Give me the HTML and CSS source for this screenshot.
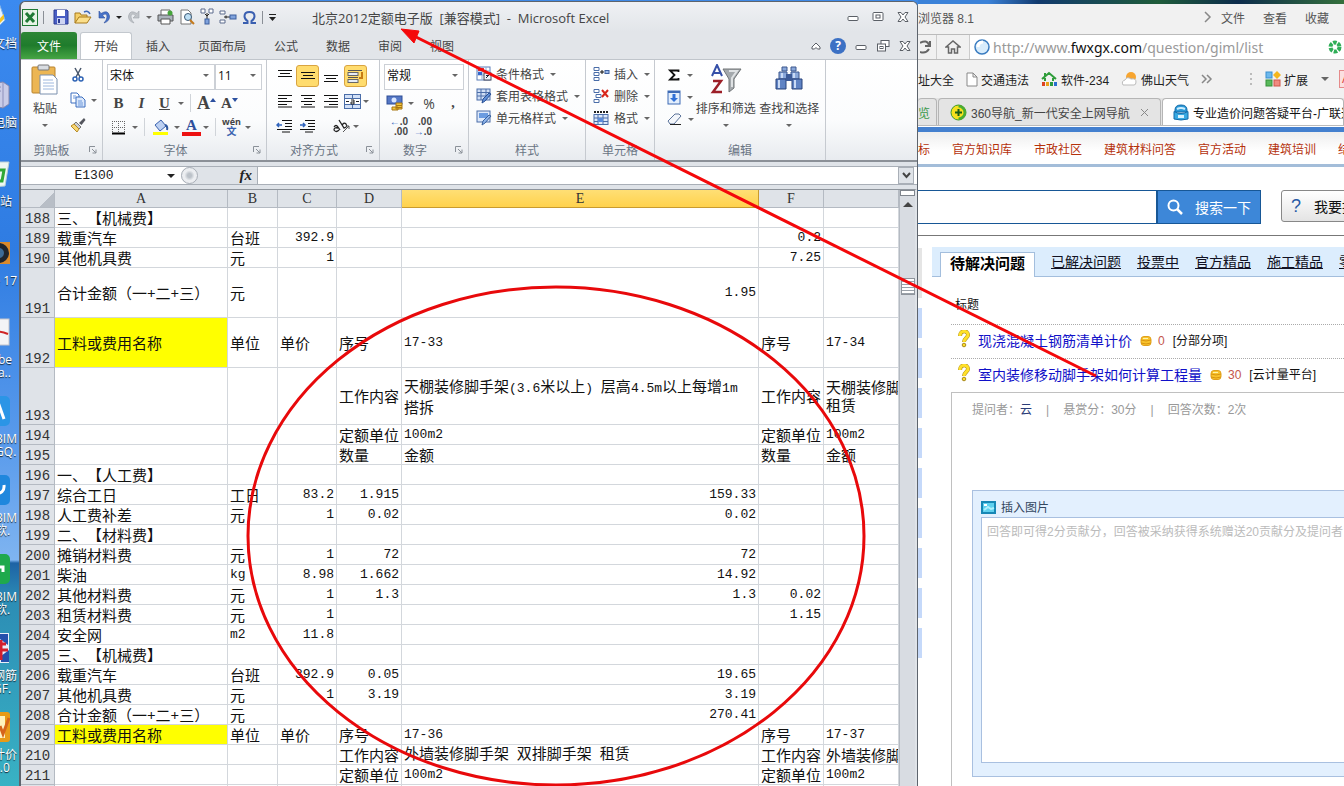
FILE: index.html
```html
<!DOCTYPE html>
<html lang="zh-CN">
<head>
<meta charset="utf-8">
<title>北京2012定额电子版 - Microsoft Excel</title>
<link rel="stylesheet" href="styles.css">
</head>
<body>
<svg class="defs" width="0" height="0">
  <defs>
    <symbol id="win-min" viewBox="0 0 14 14"><rect x="2" y="6.500" width="10" height="4" rx="1" fill="#fff" stroke="#5a5f66"/></symbol>
    <symbol id="win-max" viewBox="0 0 14 14"><rect x="2" y="2.500" width="10" height="8" rx="1" fill="#fff" stroke="#5a5f66"/><rect x="5" y="5" width="4" height="3" fill="#fff" stroke="#5a5f66"/></symbol>
    <symbol id="win-restore" viewBox="0 0 14 14"><rect x="5" y="1.500" width="8" height="6" fill="#fff" stroke="#5a5f66"/><rect x="1.500" y="5" width="8" height="7" fill="#fff" stroke="#5a5f66"/><rect x="4" y="7.500" width="3" height="2" fill="none" stroke="#5a5f66"/></symbol>
    <symbol id="win-close" viewBox="0 0 14 14"><path d="M2 2.500h3l2 2.500 2-2.500h3L9 7l3 4.500H9L7 9l-2 2.500H2L5 7z" fill="#fff" stroke="#5a5f66"/></symbol>
    <symbol id="launch" viewBox="0 0 8 8"><path d="M.5 6V.5H6M3 3l4 4M7 3.500V7H3.500" fill="none" stroke="#8a9098"/></symbol>
    <symbol id="question" viewBox="0 0 12 18"><path d="M2 6C2 0 10 0 10 5 10 8 6 8 6 12" fill="none" stroke="#a8891c" stroke-width="4"/><path d="M2 6C2 0 10 0 10 5 10 8 6 8 6 12" fill="none" stroke="#ffe02a" stroke-width="3"/><circle cx="6" cy="15" r="1.800" fill="#ffe02a" stroke="#a8891c"/></symbol>
    <symbol id="coin" viewBox="0 0 12 12"><rect x="1" y="1.500" width="10" height="9" rx="3" fill="#f8c32c" stroke="#e0a01c"/><path d="M1 5q5 2 10 0M1 8q5 2 10 0" stroke="#d9940f" fill="none"/><path d="M3 3.500h5" stroke="#fff3a8"/></symbol>
  </defs>
</svg>

<div class="desktop">
  <aside class="shortcuts">
    <div class="shortcut"><svg width="32" height="32"><path d="M4 8 20 3 26 20 18 28 4 25z" fill="#e8f4ff" stroke="#86b6e6"/><path d="M14 26 25 14v5l-9 9z" fill="#f2c327"/></svg><span>文档</span></div>
    <div class="shortcut"><svg width="32" height="32"><path d="M10 5 24 3l6 4v18l-6 4-14-3z" fill="#c9cce8" stroke="#8387ae"/><path d="M24 3v26M12 9l10-1M12 13l10-1" stroke="#8d90bb"/></svg><span>电脑</span></div>
    <div class="shortcut"><svg width="32" height="32"><path d="M6 4h24l-4 24-14 1z" fill="#eef7f2" stroke="#b9cfd6"/><path d="M18 12h7l-2 11h-6" fill="none" stroke="#2fa836" stroke-width="3"/></svg><span class="near">站</span></div>
    <div class="shortcut"><svg width="32" height="32"><rect x="4" y="5" width="27" height="22" fill="#d9892b"/><circle cx="20" cy="16" r="10" fill="#20252c"/><circle cx="20" cy="16" r="5" fill="#3d6b96"/></svg><span>e 17</span></div>
    <div class="shortcut"><svg width="32" height="32"><rect x="3" y="3" width="27" height="26" fill="#f4f4f6" stroke="#c5c5cc"/><path d="M10 18q6-5 19 0" fill="none" stroke="#cf2424" stroke-width="2"/></svg><span class="near">be<br>a..</span></div>
    <div class="shortcut"><svg width="32" height="32"><rect x="1" y="1" width="30" height="30" rx="5" fill="#2b95e6"/><path d="M15 24 20 10l5 14" fill="none" stroke="#fff" stroke-width="3"/></svg><span>BIM<br>GQ.</span></div>
    <div class="shortcut"><svg width="32" height="32"><rect x="1" y="1" width="30" height="30" rx="5" fill="#1f87dd"/><path d="M15 20q11 0 10-9" fill="none" stroke="#fff" stroke-width="3"/></svg><span>BIM<br>软.</span></div>
    <div class="shortcut"><svg width="32" height="32"><rect x="1" y="1" width="30" height="30" rx="5" fill="#1fa94c"/><path d="M14 14h10v5" fill="none" stroke="#fff" stroke-width="3"/></svg><span>BIM<br>软.</span></div>
    <div class="shortcut"><svg width="32" height="32"><rect x="2" y="1" width="28" height="30" fill="#e9eef8"/><path d="M14 2h15v11l-8-6z" fill="#2450ac"/><path d="M22 24l8-6v12h-8z" fill="#2450ac"/><path d="M13 12h14M13 18h16M22 8v20" stroke="#d41f2d" stroke-width="3"/></svg><span>钢筋<br>GF.</span></div>
    <div class="shortcut"><svg width="32" height="32"><rect x="1" y="1" width="30" height="30" rx="3" fill="#e89b17"/><rect x="5" y="5" width="21" height="22" fill="#fff2bd"/><path d="M21 15l3 8 6-16" fill="none" stroke="#d6641a" stroke-width="3"/></svg><span>计价<br>4.0</span></div>
  </aside>

  <section class="excel">
    <header class="titlebar">
      <div class="quick">
        <svg width="16" height="17"><rect x=".5" y=".5" width="15" height="16" fill="#e7f3e6" stroke="#1f7a35"/><path d="M4 4l8 9M12 4l-8 9" stroke="#1f7a35" stroke-width="3"/></svg>
        <i class="bar"></i>
        <button aria-label="保存"><svg width="16" height="16"><path d="M1 1h13l1 1v13H1z" fill="#4a5fc4" stroke="#2b3b92"/><rect x="4" y="1" width="8" height="6" fill="#fff"/><rect x="4" y="9" width="8" height="6" fill="#cdd4f2"/><rect x="5" y="10" width="2" height="4" fill="#2b3b92"/></svg></button>
        <button aria-label="打开"><svg width="18" height="16"><path d="M1 14V4h5l1 2h6v3" fill="#f5cf68" stroke="#a87b1c"/><path d="M1 14 5 8h12l-4 6z" fill="#fbdf8b" stroke="#a87b1c"/><path d="M10 3q4-2 6 2" fill="none" stroke="#3d68b8" stroke-width="1.500"/></svg></button>
        <button class="drop" aria-label="撤消"><svg width="14" height="16"><path d="M2 2v7h6L5.500 6.500Q10 3 10 8q0 3-3 6 6-2 5.500-7Q11 0 4 4.500z" fill="#4773c9" stroke="#2d4f9c" stroke-width=".6"/></svg><i class="caret dark"></i></button>
        <button class="drop" aria-label="恢复"><svg width="14" height="16"><path d="M12 2v7H6l2.500-2.500Q4 3 4 8q0 3 3 6-6-2-5.500-7Q3 0 10 4.500z" fill="#bfc3c8" stroke="#a0a5ab" stroke-width=".6"/></svg><i class="caret"></i></button>
        <button aria-label="打印"><svg width="17" height="16"><path d="M4 6V1h9v5" fill="#fff" stroke="#666"/><path d="M1 6h15v6H1z" fill="#aab2bb" stroke="#555"/><path d="M4 10h9v5H4z" fill="#fff" stroke="#555"/><circle cx="13" cy="4" r="2.500" fill="#46a53c"/></svg></button>
        <button aria-label="打印预览"><svg width="16" height="16"><path d="M2 1h7l3 3v11H2z" fill="#fff" stroke="#777"/><circle cx="9" cy="8" r="3.500" fill="#bfe0f5" stroke="#3c5a77"/><path d="M11 11l4 4" stroke="#c47a1d" stroke-width="2"/></svg></button>
        <button aria-label="向下填充"><svg width="14" height="18"><path d="M1 1h4v4H1zM9 1h4v4H9z" fill="#fff" stroke="#5a6b8c"/><path d="M5 6l2 2 2-2M7 5v6" fill="none" stroke="#222"/><rect x="5" y="11" width="4" height="5" fill="#7fa2dc" stroke="#3d5f9e"/></svg></button>
        <button aria-label="插入单元格"><svg width="18" height="16"><path d="M1 2h5v3H1zM1 11h5v3H1z" fill="#fff" stroke="#5a6b8c"/><path d="M5 8h6M7 6.500v3" stroke="#222"/><rect x="11" y="6" width="6" height="4" fill="#7fa2dc" stroke="#3d5f9e"/></svg></button>
        <button aria-label="符号"><svg width="15" height="15"><path d="M1 13h4.500v-2Q2.500 9 2.500 6.200 2.500 2 7.500 2t5 4.200Q12.500 9 9.500 11v2H14" fill="none" stroke="#3a5fb0" stroke-width="2"/></svg></button>
        <i class="bar"></i>
        <button aria-label="自定义"><svg width="9" height="9"><path d="M1 1.500h7" stroke="#222"/><path d="M1 4h7L4.500 8z" fill="#222"/></svg></button>
      </div>
      <h1>北京2012定额电子版&nbsp; [兼容模式] &nbsp;-&nbsp; Microsoft Excel</h1>
      <div class="controls wide">
        <button aria-label="最小化"><svg width="14" height="14"><use href="#win-min"/></svg></button>
        <button aria-label="最大化"><svg width="14" height="14"><use href="#win-max"/></svg></button>
        <button aria-label="关闭"><svg width="14" height="14"><use href="#win-close"/></svg></button>
      </div>
    </header>

    <nav class="tabs">
      <button class="file">文件</button>
      <button class="active">开始</button><button>插入</button><button>页面布局</button><button>公式</button><button>数据</button><button>审阅</button><button>视图</button>
      <div class="controls">
        <button aria-label="折叠功能区"><svg width="12" height="12"><path d="M2 7l4-4 4 4v2H7.500L6 7.500 4.500 9H2z" fill="#fff" stroke="#5a5f66"/></svg></button>
        <button aria-label="帮助" class="help">?</button>
        <button aria-label="最小化工作簿"><svg width="14" height="14"><use href="#win-min"/></svg></button>
        <button aria-label="还原工作簿"><svg width="14" height="14"><use href="#win-restore"/></svg></button>
        <button aria-label="关闭工作簿"><svg width="14" height="14"><use href="#win-close"/></svg></button>
      </div>
    </nav>

    <div class="ribbon">
      <div class="group g-clip">
        <div class="body">
          <button class="big"><svg width="28" height="32"><rect x="1" y="3" width="23" height="26" rx="1" fill="#ecb654" stroke="#b9832c"/><rect x="7" y="1" width="11" height="5" rx="1" fill="#d9dde2" stroke="#777"/><path d="M9 11h13l4 4v15H9z" fill="#fff" stroke="#7b90ae"/><path d="M12 16h10M12 19h11M12 22h11M12 25h11" stroke="#9eb8de"/></svg><span>粘贴</span><i class="caret"></i></button>
          <div class="stack">
            <button aria-label="剪切"><svg width="16" height="16"><path d="M5 1l5 9M11 1 6 10" stroke="#48566b" stroke-width="1.500"/><circle cx="5" cy="12" r="2" fill="none" stroke="#2c62b4" stroke-width="1.500"/><circle cx="11" cy="12" r="2" fill="none" stroke="#2c62b4" stroke-width="1.500"/></svg></button>
            <button class="drop" aria-label="复制"><svg width="16" height="16"><path d="M1 1h6l2 2v8H1z" fill="#fff" stroke="#3d6fc0"/><path d="M6 5h6l3 3v7H6z" fill="#dbe8fb" stroke="#3d6fc0"/><path d="M3 4h3M3 6h3M8 9h4M8 11h5M8 13h5" stroke="#6c98dc"/></svg><i class="caret"></i></button>
            <button aria-label="格式刷"><svg width="16" height="16"><path d="M9 6l5-5 1.500 2-4 5z" fill="#54565e"/><path d="M6 5l5 5-2 2-5-5z" fill="#c9cdd4" stroke="#777"/><path d="M4 7l5 5-2 3L1 9z" fill="#f7d774" stroke="#b68a25"/></svg></button>
          </div>
        </div>
        <footer>剪贴板<svg width="8" height="8"><use href="#launch"/></svg></footer>
      </div>

      <div class="group g-font">
        <div class="body rows">
          <div class="line">
            <label class="combo grow"><select aria-label="字体"><option>宋体</option></select><i class="caret"></i></label>
            <label class="combo size"><select aria-label="字号"><option>11</option></select><i class="caret"></i></label>
          </div>
          <div class="line">
            <button class="slot serif"><b>B</b></button><button class="slot serif"><em>I</em></button><button class="slot serif"><u>U</u></button><i class="caret"></i><i class="sep"></i>
            <button class="slot serif large">A<svg width="6" height="12"><path d="M0 5h6L3 1z" fill="#2c50a0"/></svg></button><button class="slot serif">A<svg width="6" height="12"><path d="M0 1h6L3 5z" fill="#2c50a0"/></svg></button>
          </div>
          <div class="line">
            <button class="slot" aria-label="边框"><svg width="15" height="15"><path d="M1.500 1v12M7.500 1v12M13.500 1v12M1 1.500h13M1 7.500h13" stroke="#666" stroke-dasharray="1 1"/><path d="M1 13.500h13" stroke="#000" stroke-width="2"/></svg></button><i class="caret"></i><i class="sep"></i>
            <button class="slot" aria-label="填充颜色"><svg width="17" height="17"><path d="M3 6l6-5 5 6-6 5z" fill="#bcd0f2" stroke="#3a61ad"/><path d="M13 6q3 1 2 5" stroke="#2e579f" stroke-width="2" fill="none"/><rect x="1" y="13" width="15" height="3" fill="#ff0"/></svg></button><i class="caret"></i>
            <button class="slot fontcolor">A</button><i class="caret"></i><i class="sep"></i>
            <button class="slot wen"><span>wén</span><span class="zh">文</span></button><i class="caret"></i>
          </div>
        </div>
        <footer>字体<svg width="8" height="8"><use href="#launch"/></svg></footer>
      </div>

      <div class="group g-align">
        <div class="body aligns">
          <button aria-label="顶端对齐"><svg width="16" height="16"><path d="M1 2.500h14M3 5.500h10M1 8.500h14" stroke="#111"/></svg></button>
          <button class="on" aria-label="垂直居中"><svg width="16" height="16"><path d="M1 4.500h14M3 7.500h10M1 10.500h14" stroke="#111"/></svg></button>
          <button aria-label="底端对齐"><svg width="16" height="16"><path d="M1 7.500h14M3 10.500h10M1 13.500h14" stroke="#111"/></svg></button>
          <button class="on wraptext" aria-label="自动换行"><svg width="18" height="16"><path d="M1 2.500h14M1 9.500h10" stroke="#555"/><rect x="1" y="4.500" width="10" height="3" fill="#e6ecf6" stroke="#666"/><rect x="1" y="11.500" width="10" height="3" fill="#e6ecf6" stroke="#666"/><path d="M15 4v6h-3" fill="none" stroke="#c77b14" stroke-width="2"/></svg></button>
          <button aria-label="左对齐"><svg width="16" height="16"><path d="M1 2.500h14M1 5.500h9M1 8.500h14M1 11.500h9M1 14h14" stroke="#111"/></svg></button>
          <button aria-label="居中"><svg width="16" height="16"><path d="M1 2.500h14M4 5.500h8M1 8.500h14M4 11.500h8M1 14h14" stroke="#111"/></svg></button>
          <button aria-label="右对齐"><svg width="16" height="16"><path d="M1 2.500h14M6 5.500h9M1 8.500h14M6 11.500h9M1 14h14" stroke="#111"/></svg></button>
          <button class="drop" aria-label="合并"><svg width="17" height="15"><rect x=".5" y=".5" width="16" height="14" fill="#d3e1f7" stroke="#4a6da8"/><path d="M0 4.500h17M0 10.500h17M8.500 0v4M8.500 11v4" stroke="#4a6da8"/><rect x="1" y="5" width="15" height="5" fill="#fff"/><path d="M2 7.500h3M12 7.500h3M7 6h3v4M10 8H7v2h3" stroke="#222" fill="none"/></svg><i class="caret"></i></button>
          <button aria-label="减少缩进"><svg width="17" height="16"><path d="M6 2.500h10M9 5.500h7M9 8.500h7M1 11.500h15M6 14h8" stroke="#111"/><path d="M6 7H1M3 5 1 7l2 2" fill="none" stroke="#2e63bd" stroke-width="1.500"/></svg></button>
          <button aria-label="增加缩进"><svg width="17" height="16"><path d="M6 2.500h10M9 5.500h7M9 8.500h7M1 11.500h15M6 14h8" stroke="#111"/><path d="M1 7h5M4 5l2 2-2 2" fill="none" stroke="#2e63bd" stroke-width="1.500"/></svg></button>
          <button class="drop span2" aria-label="方向"><svg width="20" height="16"><path d="M3 9q2-3 4 0l2 3M7 10q-4-1-4 2 2 3 5 0M8 2l5 8q4-1 2-4-2-2-4 1" fill="none" stroke="#222" stroke-width="1.300"/><path d="M12 14l6-6M15 8h3v3" fill="none" stroke="#555"/></svg><i class="caret"></i></button>
        </div>
        <footer>对齐方式<svg width="8" height="8"><use href="#launch"/></svg></footer>
      </div>

      <div class="group g-num">
        <div class="body rows">
          <div class="line"><label class="combo grow"><select aria-label="数字格式"><option>常规</option></select><i class="caret"></i></label></div>
          <div class="line"><button class="slot" aria-label="会计格式"><svg width="18" height="16"><rect x="1" y="1" width="15" height="8" fill="#5577c5" stroke="#2f4e96"/><circle cx="8" cy="5" r="2.500" fill="#d9e6ff"/><path d="M10 8h6v6h-6zM6 12h6v3H6z" fill="#f2c63a" stroke="#a87712"/><path d="M10 10.500h6M10 12.500h6" stroke="#a87712"/></svg></button><i class="caret"></i><button class="slot pct">%</button><button class="slot pct serif"><b>,</b></button></div>
          <div class="line"><button class="dec"><span class="blue">←</span>.0<br>.00</button><button class="dec">.00<br><span class="blue">→</span>.0</button></div>
        </div>
        <footer>数字<svg width="8" height="8"><use href="#launch"/></svg></footer>
      </div>

      <div class="group g-style">
        <div class="body list">
          <button><svg width="16" height="16"><rect x="1" y="1" width="13" height="13" fill="#fff" stroke="#5b7db8"/><path d="M1 5h13M1 9h13M6 1v13M10 1v13" stroke="#8ba8d8"/><rect x="2" y="2" width="6" height="3" fill="#d33"/><rect x="2" y="6" width="4" height="3" fill="#36c"/><rect x="8" y="7" width="7" height="7" fill="#eef3fb" stroke="#445"/><path d="M10 12l3-3M10 9.500h3" stroke="#223"/></svg>条件格式<i class="caret"></i></button>
          <button><svg width="16" height="16"><rect x="1" y="1" width="13" height="11" fill="#cfdef6" stroke="#4a6da8"/><path d="M1 4.500h13M1 8h13M5 1v11M10 1v11" stroke="#4a6da8"/><path d="M15 6l-6 7-3 2 1-4 6-6z" fill="#6190d8" stroke="#274f95"/></svg>套用表格格式<i class="caret"></i></button>
          <button><svg width="16" height="16"><rect x="1" y="1" width="13" height="11" fill="#dce8fa" stroke="#4a6da8"/><rect x="3" y="3" width="9" height="5" fill="#6a9be0"/><path d="M15 6l-6 7-3 2 1-4 6-6z" fill="#8fb4ea" stroke="#35609f"/></svg>单元格样式<i class="caret"></i></button>
        </div>
        <footer>样式</footer>
      </div>

      <div class="group g-cells">
        <div class="body list">
          <button><svg width="17" height="16"><path d="M1 1.500h5v3H1zM1 6.500h5v3H1zM1 11.500h5v3H1z" fill="#fff" stroke="#4a6da8"/><path d="M7 6h4M9 4v4" stroke="#111"/><rect x="12" y="4.500" width="4" height="3" fill="#9fbcea" stroke="#3d5f9e"/></svg>插入<i class="caret"></i></button>
          <button><svg width="17" height="16"><path d="M1 1.500h5v3H1zM3 6.500h5v3H3zM1 11.500h5v3H1z" fill="#fff" stroke="#4a6da8"/><path d="M9 2l6 7M15 2 9 9" stroke="#d8261c" stroke-width="2"/></svg>删除<i class="caret"></i></button>
          <button><svg width="17" height="16"><path d="M1 2h15" stroke="#222" stroke-width="2" stroke-dasharray="2 1"/><rect x="1" y="4.500" width="14" height="10" fill="#dce8fa" stroke="#4a6da8"/><path d="M1 8h14M1 11.500h14M5 4v11M10 4v11" stroke="#4a6da8"/><rect x="5" y="8" width="5" height="4" fill="#5b8cdc"/></svg>格式<i class="caret"></i></button>
        </div>
        <footer>单元格</footer>
      </div>

      <div class="group g-edit">
        <div class="body">
          <div class="list narrow">
            <button aria-label="求和"><svg width="14" height="14"><path d="M11.500 4V2.500H3L7.500 7 3 11.500h8.500V10" fill="none" stroke="#111" stroke-width="1.800"/></svg><i class="caret"></i></button>
            <button aria-label="填充"><svg width="14" height="15"><rect x="1" y="1" width="12" height="13" fill="#e3eefc" stroke="#3d6ab5"/><path d="M1 2h12" stroke="#3d6ab5" stroke-width="2"/><path d="M5.500 4h3v4H11l-4 4-4-4h2.500z" fill="#2f6fd6"/></svg><i class="caret"></i></button>
            <button aria-label="清除"><svg width="15" height="14"><path d="M1 9l7-7h4l2 2-7 8H3z" fill="#f3f6fb" stroke="#5b7399"/><path d="M3 12.500h11" stroke="#222"/></svg><i class="caret"></i></button>
          </div>
          <button class="big"><svg width="32" height="30"><path d="M13 5h18l-7 10v9l-5 4V15z" fill="#a4a9ad" stroke="#707477"/><path d="M19 7h8l-5 7v9" fill="none" stroke="#dfe2e4" stroke-width="2"/><path d="M2 12 7 1l5 11M4 9h7" fill="none" stroke="#3550a8" stroke-width="2"/><path d="M3 17h8L3 28h9" fill="none" stroke="#9c1f28" stroke-width="2.500"/></svg><span>排序和筛选</span><i class="caret"></i></button>
          <button class="big"><svg width="30" height="30"><path d="M8 3h5v4H8zM17 3h5v4h-5zM5 8h8v7H5zM17 8h8v7h-8z" fill="#8aa8da" stroke="#3a568d"/><path d="M2 15h10v10H2zM18 15h10v10H18z" fill="#5f83c4" stroke="#28427a"/><path d="M5 16v8M21 16v8M8 9v5M20 9v5" stroke="#c9daf5" stroke-width="2"/><rect x="12" y="10" width="6" height="7" fill="#3c5a97"/></svg><span>查找和选择</span><i class="caret"></i></button>
        </div>
        <footer>编辑</footer>
      </div>
    </div>

    <div class="formula">
      <label class="namebox"><input aria-label="名称框" value="E1300"><i class="caret dark wide"></i></label>
      <div class="fx"><i class="knob"></i><em>fx</em></div>
      <input class="content" aria-label="编辑栏">
      <button aria-label="展开编辑栏"><svg width="9" height="7"><path d="M1 1l3.500 4L8 1" fill="none" stroke="#444" stroke-width="2"/></svg></button>
    </div>

    <div class="workbook">
      <div class="sheet">
      <table>
        <colgroup><col class="c-h"><col class="c-a"><col class="c-b"><col class="c-c"><col class="c-d"><col class="c-e"><col class="c-f"><col></colgroup>
        <thead><tr><th class="corner"></th><th>A</th><th>B</th><th>C</th><th>D</th><th class="sel">E</th><th>F</th><th></th></tr></thead>
        <tbody>
        <tr><th>188</th><td>三、【机械费】</td><td></td><td></td><td></td><td></td><td></td><td></td></tr>
        <tr><th>189</th><td>载重汽车</td><td>台班</td><td class="n">392.9</td><td></td><td></td><td class="n">0.2</td><td></td></tr>
        <tr><th>190</th><td>其他机具费</td><td>元</td><td class="n">1</td><td></td><td></td><td class="n">7.25</td><td></td></tr>
        <tr class="tall"><th>191</th><td>合计金额（一+二+三）</td><td>元</td><td></td><td></td><td class="n">1.95</td><td></td><td></td></tr>
        <tr class="tall"><th>192</th><td class="mark">工料或费用名称</td><td>单位</td><td>单价</td><td>序号</td><td class="m">17-33</td><td>序号</td><td class="m">17-34</td></tr>
        <tr class="taller"><th>193</th><td></td><td></td><td></td><td>工作内容</td><td class="wrap">天棚装修脚手架<span class="m">(3.6</span>米以上<span class="m">) </span>层高<span class="m">4.5m</span>以上每增<span class="m">1m</span><br>搭拆</td><td>工作内容</td><td class="wrap">天棚装修脚手架<br>租赁</td></tr>
        <tr><th>194</th><td></td><td></td><td></td><td>定额单位</td><td class="m">100m2</td><td>定额单位</td><td class="m">100m2</td></tr>
        <tr><th>195</th><td></td><td></td><td></td><td>数量</td><td>金额</td><td>数量</td><td>金额</td></tr>
        <tr><th>196</th><td>一、【人工费】</td><td></td><td></td><td></td><td></td><td></td><td></td></tr>
        <tr><th>197</th><td>综合工日</td><td>工日</td><td class="n">83.2</td><td class="n">1.915</td><td class="n">159.33</td><td></td><td></td></tr>
        <tr><th>198</th><td>人工费补差</td><td>元</td><td class="n">1</td><td class="n">0.02</td><td class="n">0.02</td><td></td><td></td></tr>
        <tr><th>199</th><td>二、【材料费】</td><td></td><td></td><td></td><td></td><td></td><td></td></tr>
        <tr><th>200</th><td>摊销材料费</td><td>元</td><td class="n">1</td><td class="n">72</td><td class="n">72</td><td></td><td></td></tr>
        <tr><th>201</th><td>柴油</td><td class="m">kg</td><td class="n">8.98</td><td class="n">1.662</td><td class="n">14.92</td><td></td><td></td></tr>
        <tr><th>202</th><td>其他材料费</td><td>元</td><td class="n">1</td><td class="n">1.3</td><td class="n">1.3</td><td class="n">0.02</td><td></td></tr>
        <tr><th>203</th><td>租赁材料费</td><td>元</td><td class="n">1</td><td></td><td></td><td class="n">1.15</td><td></td></tr>
        <tr><th>204</th><td>安全网</td><td class="m">m2</td><td class="n">11.8</td><td></td><td></td><td></td><td></td></tr>
        <tr><th>205</th><td>三、【机械费】</td><td></td><td></td><td></td><td></td><td></td><td></td></tr>
        <tr><th>206</th><td>载重汽车</td><td>台班</td><td class="n">392.9</td><td class="n">0.05</td><td class="n">19.65</td><td></td><td></td></tr>
        <tr><th>207</th><td>其他机具费</td><td>元</td><td class="n">1</td><td class="n">3.19</td><td class="n">3.19</td><td></td><td></td></tr>
        <tr><th>208</th><td>合计金额（一+二+三）</td><td>元</td><td></td><td></td><td class="n">270.41</td><td></td><td></td></tr>
        <tr><th>209</th><td class="mark">工料或费用名称</td><td>单位</td><td>单价</td><td>序号</td><td class="m">17-36</td><td>序号</td><td class="m">17-37</td></tr>
        <tr><th>210</th><td></td><td></td><td></td><td>工作内容</td><td>外墙装修脚手架<span class="m"> </span>双排脚手架<span class="m"> </span>租赁</td><td>工作内容</td><td>外墙装修脚手架</td></tr>
        <tr><th>211</th><td></td><td></td><td></td><td>定额单位</td><td class="m">100m2</td><td>定额单位</td><td class="m">100m2</td></tr>
        <tr><th></th><td></td><td></td><td></td><td></td><td></td><td></td><td></td></tr>
        </tbody>
      </table>
      </div>
      <div class="scroll"><i class="split"></i><i class="up"></i><i class="thumb"></i></div>
    </div>
  </section>

  <section class="browser">
    <div class="wallpaper"></div>
    <div class="menubar"><span class="name">浏览器 8.1</span><svg width="8" height="12"><path d="M1 1l5 5-5 5" fill="none" stroke="#888" stroke-width="1.500"/></svg><button>文件</button><button>查看</button><button>收藏</button></div>
    <div class="address">
      <button class="reload" aria-label="刷新"><svg width="14" height="18"><path d="M0 5q7-4 9 2M10 3v5H5M9 11q-3 5-9 3" fill="none" stroke="#666" stroke-width="2"/></svg></button>
      <button class="home" aria-label="主页"><svg width="16" height="16"><path d="M1 8l7-6 7 6h-2.500v6H9.500v-4h-3v4H3.500V8z" fill="none" stroke="#666" stroke-width="1.500"/></svg></button>
      <div class="url"><svg width="18" height="18"><circle cx="9" cy="9" r="7" fill="#d8ecfb" stroke="#3a7cc0" stroke-width="1.500"/><path d="M5 9q0-5 5-5" stroke="#fff" stroke-width="3" fill="none"/></svg><span>http://www.<b>fwxgx.com</b>/question/giml/list</span>
      <svg class="speed" width="14" height="14"><circle cx="7" cy="7" r="4.500" fill="none" stroke="#2fae57" stroke-width="4" stroke-dasharray="3.500 1.200"/></svg></div>
    </div>
    <div class="bookmarks">
      <a href="#">址大全</a>
      <a href="#"><svg width="12" height="15"><path d="M1 1h6l4 4v9H1zM7 1v4h4" fill="#fff" stroke="#888"/></svg>交通违法</a>
      <a href="#"><svg width="17" height="17"><path d="M1 8l7-6 7 6M4 7v3M12 7v3M4 2v4" fill="none" stroke="#2f9d3a" stroke-width="2"/><path d="M1 13h3" stroke="#d42" stroke-width="4"/><path d="M5 13h3" stroke="#e9a21a" stroke-width="4"/><path d="M9 13h3" stroke="#2a9a40" stroke-width="4"/><path d="M13 13h3" stroke="#2a6fd0" stroke-width="4"/></svg>软件-234</a>
      <a href="#"><svg width="17" height="16"><circle cx="10" cy="6" r="5" fill="#f7a530"/><path d="M2 14q-2-4 2-5 2-4 6-1 5-1 5 3 0 3-2 3z" fill="#fff" stroke="#bbb"/></svg>佛山天气</a>
      <svg width="12" height="10"><path d="M1 1l4 4-4 4M6 1l4 4-4 4" fill="none" stroke="#888" stroke-width="1.500"/></svg>
      <svg class="dots" width="4" height="14"><path d="M2 1v12" stroke="#bbb" stroke-width="2" stroke-dasharray="2 3"/></svg>
      <button class="ext"><svg width="16" height="16"><rect x="1" y="1" width="6" height="6" fill="#6db8ec" stroke="#3a8fd0"/><rect x="1" y="9" width="6" height="6" fill="#59b95b" stroke="#36913a"/><rect x="9" y="9" width="6" height="6" fill="#f08a80" stroke="#d0564a"/><path d="M12 0l4 4-4 4-4-4z" fill="#f5b61d"/></svg>扩展<i class="caret wide"></i></button>
      <span class="aa">Aa</span>
    </div>
    <div class="pagetabs">
      <button class="first">览</button>
      <button class="second"><svg width="17" height="17"><circle cx="8.500" cy="8.500" r="7.500" fill="#f6e11e" stroke="#3a9a2b"/><path d="M8.500 1a7.500 7.500 0 0 1 0 15z" fill="#49ad33"/><circle cx="8.500" cy="8.500" r="5" fill="#f6e11e"/><path d="M8.500 5v7M5 8.500h7" stroke="#165c17" stroke-width="2"/></svg><span>360导航_新一代安全上网导航</span><svg width="9" height="9"><path d="M1 1l7 7M8 1 1 8" stroke="#888"/></svg></button>
      <button class="third"><svg width="16" height="17"><path d="M2 6q0-5 6-5t6 5v2H2z" fill="#2c9ad8" stroke="#126aa8"/><path d="M1 7.500q7 4 14 0V15q-7 2-14 0z" fill="#38a9e2" stroke="#126aa8"/><path d="M4 5q4-2 8 0" stroke="#cdeeff" stroke-width="2" fill="none"/><path d="M5 12.500h6" stroke="#d8f3ff" stroke-width="3"/></svg><span>专业造价问题答疑平台-广联达</span></button>
    </div>
    <nav class="sitenav"><a href="#">标</a><a href="#">官方知识库</a><a href="#">市政社区</a><a href="#">建筑材料问答</a><a href="#">官方活动</a><a href="#">建筑培训</a><a href="#">结算</a></nav>
    <div class="search">
      <input aria-label="搜索"><button class="go"><svg width="16" height="16"><circle cx="6.500" cy="6.500" r="5" fill="none" stroke="#fff" stroke-width="2"/><path d="M10 10l5 5" stroke="#fff" stroke-width="2.500"/></svg>搜索一下</button>
      <button class="ask"><b>?</b>我要提问</button>
    </div>
    <div class="page">
      <div class="side"><i class="grey"></i><i></i><i></i><i></i><i></i><i></i><i></i><i></i><i></i><i></i></div>
      <main>
        <nav class="qtabs"><a href="#" class="cur">待解决问题</a><a href="#">已解决问题</a><a href="#">投票中</a><a href="#">官方精品</a><a href="#">施工精品</a><a href="#">零回答</a></nav>
        <div class="questions">
          <div class="head">标题</div>
          <div class="q"><svg width="12" height="18"><use href="#question"/></svg><a href="#">现浇混凝土钢筋清单计价</a><svg width="12" height="12"><use href="#coin"/></svg><span class="pts">0</span><span>[分部分项]</span></div>
          <div class="q"><svg width="12" height="18"><use href="#question"/></svg><a href="#">室内装修移动脚手架如何计算工程量</a><svg width="12" height="12"><use href="#coin"/></svg><span class="pts">30</span><span>[云计量平台]</span></div>
          <div class="detail">
            <p><span>提问者：<b>云</b></span><i>|</i><span>悬赏分：30分</span><i>|</i><span>回答次数：2次</span></p>
            <div class="answer">
              <button><svg width="15" height="13"><rect x="1" y="1" width="13" height="11" fill="#5fd0ee" stroke="#1787b5" stroke-width="2"/><path d="M3 9l4-3 3 2 3-1" stroke="#aef0fc" stroke-width="2" fill="none"/><rect x="3" y="3" width="3" height="2" fill="#fff"/></svg>插入图片</button>
              <textarea aria-label="回答" placeholder="回答即可得2分贡献分，回答被采纳获得系统赠送20贡献分及提问者"></textarea>
            </div>
          </div>
        </div>
      </main>
    </div>
  </section>

  <svg class="marks" width="1344" height="800"><ellipse cx="556" cy="536" rx="308" ry="249" fill="none" stroke="#e8090b" stroke-width="3"/><path d="M1096 376 416 37" stroke="#f4080a" stroke-width="3"/><path d="M401 29l18 2-5 12z" fill="#f4080a" stroke="#f4080a"/></svg>
</div>
</body>
</html>
```
FILE: styles.css
```css
* { box-sizing: border-box; }
body { margin: 0; font-family: "Open Sans", "Noto Sans CJK SC", sans-serif; font-size: 12px; color: #333; text-spacing-trim: space-all; }
button, input, select, textarea { font: inherit; color: inherit; background: none; border: 0; padding: 0; margin: 0; border-radius: 0; outline: 0; }
a { color: inherit; text-decoration: none; }
svg { flex: none; display: block; }
.defs { position: absolute; }
.desktop { position: relative; display: flex; height: 100vh; overflow: hidden; background: #3f8ae6; }

/* desktop shortcuts */
.shortcuts { width: 19px; flex: none; overflow: hidden; padding: 0 2px 0 0; background: linear-gradient(#3b8af0 0, #2f7ce2 250px, #5b9cec 450px, #7fb4f0 560px, #1e63a5 563px, #2c8db5 600px, #39b2c4 100%); }
.shortcut { height: 79px; display: flex; flex-direction: column; align-items: flex-end; gap: 5px; white-space: nowrap; color: #fff; line-height: 13px; text-shadow: 0 1px 1px #123; }
.shortcut svg { margin-right: 6px; }
.shortcut .near { margin-right: 5px; }

/* Excel window */
.excel { width: 899px; flex: none; display: flex; flex-direction: column; margin-top: 1px; border: 2px solid #5d646d; border-width: 1px 1px 0 2px; border-radius: 6px 6px 0 0; background: #dfe3e8; }
.titlebar { height: 30px; display: flex; align-items: center; background: linear-gradient(#eff1f4, #e2e5e9); border-radius: 5px 5px 0 0; }
.titlebar h1 { flex: 1; margin: 0 0 0 35px; font-size: 13px; font-weight: 400; white-space: nowrap; color: #444; }
.quick { display: flex; align-items: center; gap: 5px; padding-left: 1px; }
.quick button { display: flex; align-items: center; }
.bar { width: 1px; height: 13px; background: #8a8f96; margin: 0 4px 0 0; }
.quick .bar:nth-last-child(2) { margin-right: 0; }
.caret { width: 0; height: 0; flex: none; border: 3px solid transparent; border-top-color: #666; border-bottom: 0; }
.caret.dark { border-top-color: #222; }
.caret.wide { border-width: 4px; border-bottom: 0; }
.drop { display: flex; align-items: center; gap: 5px; }
.controls { display: flex; align-items: center; gap: 8px; padding-right: 5px; }
.controls.wide { gap: 11px; padding-right: 7px; }
.tabs { height: 27px; display: flex; background: #e2e5e9; }
.tabs > button { padding: 0 14px; color: #444; }
.tabs > .file { width: 56px; margin-right: 3px; color: #fff; border-radius: 3px 3px 0 0; background: linear-gradient(#2d8636, #1f7c2c 50%, #46a544); }
.tabs > .active { background: #fff; border: 1px solid #c3c8ce; border-bottom: 0; border-radius: 3px 3px 0 0; padding: 0 13px; }
.tabs .controls { margin-left: auto; }
.tabs .help { width: 16px; height: 16px; border-radius: 8px; background: #3c71c4; color: #fff; font-weight: 700; line-height: 16px; }

.ribbon { display: flex; height: 103px; border-top: 1px solid #c0c5cb; border-bottom: 2px solid #8b9097; background: linear-gradient(#fff, #fbfcfd 60%, #e8ebef); }
.group { display: flex; flex-direction: column; border-right: 1px solid #c6cad0; color: #444; }
.group .body { flex: 1; display: flex; padding: 4px 4px 0; }
.group footer { height: 20px; display: flex; justify-content: center; align-items: center; position: relative; color: #6a7584; }
.group footer svg { position: absolute; right: 5px; bottom: 6px; }
.g-clip footer { padding-right: 20px; }
.g-font footer { padding-right: 18px; }
.g-align footer, .g-num footer { padding-right: 18px; }
.g-clip { width: 82px; } .g-font { width: 164px; } .g-align { width: 113px; } .g-num { width: 89px; } .g-style { width: 117px; } .g-cells { width: 69px; } .g-edit { width: 171px; }
.group button { display: flex; align-items: center; justify-content: center; }
.group .big { flex-direction: column; justify-content: flex-start; gap: 4px; width: 65px; height: 68px; line-height: 18px; white-space: nowrap; }
.group .big svg { height: 32px; }
.group .big .caret { margin-top: 2px; }
.g-clip .big { width: 40px; }
.g-clip .stack { display: flex; flex-direction: column; gap: 9px; padding: 3px 0 0 5px; align-items: flex-start; }
.group .rows { flex-direction: column; gap: 2px; }
.line { display: flex; align-items: center; height: 22px; }
.line:first-child { height: 26px; }
.combo { display: flex; align-items: center; height: 26px; padding: 0 5px 3px 2px; border: 1px solid #ccd0d6; background: #fff; color: #111; }
.combo select { appearance: none; flex: 1; min-width: 0; }
.combo.grow { flex: 1; } .combo.size { width: 47px; }
.slot { width: 23px; height: 20px; }
.serif { font-family: "Liberation Serif", serif; font-size: 15px; }
.serif.large { font-size: 18px; }
.serif { font-weight: 700; } .serif em { font-weight: 700; }
.sep { width: 1px; height: 18px; background: #d0d4d9; margin: 0 5px 0 8px; }
.line .slot + .caret { margin: 0 2px; }
.g-font .line .sep { margin: 0 4px; }
.fontcolor { font: 700 15px/13px "Liberation Serif", serif; color: #2e4f9b; }
.group .fontcolor { width: 19px; height: 17px; border-bottom: 4px solid #ed1111; }
.group .wen { flex-direction: column; font-size: 9px; line-height: 9px; font-weight: 700; }
.wen .zh { color: #3a62b0; line-height: 11px; font-size: 10px; }
.group .aligns { display: grid; grid-template-columns: 23px 23px 23px 28px; grid-auto-rows: 22px; gap: 3px 0; padding: 5px 6px 0; }
.aligns button.on { border: 1px solid #d9a441; border-radius: 3px; background: #ffdc6e; }
.aligns .wraptext { width: 23px; margin-left: 2px; }
.aligns .drop { gap: 2px; }
.aligns .span2 { grid-column: span 2; }
.pct { font-size: 14px; margin-left: 2px; }
.dec { width: 24px; font: 700 10px/10px "Liberation Sans", sans-serif; }
.group .dec { display: block; text-align: right; }
.blue { color: #2e63bd; }
.list { display: flex; flex-direction: column; align-items: flex-start; }
.group .body.list { padding: 3px 7px 0; }
.list button { height: 22px; gap: 4px; white-space: nowrap; }
.list .caret { margin-left: 2px; }
.list.narrow { padding: 0 0 0 8px; width: 35px; }
.g-cells .list { padding: 3px 0 0 7px; }

.formula { display: flex; height: 19px; margin: 4px 0; border-top: 1px solid #a9afb7; border-bottom: 1px solid #a9afb7; background: #fff; color: #222; }
.namebox { display: flex; align-items: center; width: 160px; padding-right: 6px; }
.namebox input { flex: 1; min-width: 0; text-align: center; font: 13px "Liberation Mono", monospace; }
.fx { width: 77px; display: flex; align-items: center; justify-content: space-between; padding-right: 5px; background: #dfe3e8; border-right: 1px solid #a9afb7; border-radius: 9px 0 0 9px; font: 700 15px "Liberation Serif", serif; }
.knob { width: 17px; height: 17px; border-radius: 9px; border: 1px solid #a9afb7; background: radial-gradient(#bcc2c9 2px, #eceef1 5px); }
.formula .content { flex: 1; }
.formula button { width: 16px; margin-right: 3px; display: flex; align-items: center; justify-content: center; background: #dfe3e8; border: 1px solid #a9afb7; }

.workbook { flex: 1; display: flex; min-height: 0; border-top: 1px solid #8f959c; border-right: 2px solid #dfe3e8; }
.sheet { flex: 1; min-width: 0; overflow: hidden; background: #fff; }
table { width: 100%; table-layout: fixed; border-collapse: separate; border-spacing: 0; font-size: 15px; line-height: 18px; color: #111; }
.c-h { width: 34px; } .c-a { width: 173px; } .c-b { width: 50px; } .c-c { width: 59px; } .c-d { width: 65px; } .c-e { width: 357px; } .c-f { width: 65px; }
th, td { height: 20px; padding: 0 0 0 2px; border-right: 1px solid #d3d7dc; border-bottom: 1px solid #d3d7dc; overflow: hidden; white-space: nowrap; text-align: left; font-weight: 400; line-height: 16px; }
th { background: #dfe3e8; border-color: #b4bac2; text-align: center; font: 14px/16px "Liberation Mono", monospace; color: #333; padding: 0; }
thead th { height: 18px; line-height: 17px; font-family: "Liberation Serif", serif; }
tbody th { vertical-align: bottom; padding: 0; }
.corner { background: linear-gradient(135deg, #dfe3e8 70%, #b8bec6 71%); }
th.sel { background: linear-gradient(#ffdf75, #ffd24d); border-color: #c99b2e; }
td.n, .m { font-family: "Liberation Mono", monospace; font-size: 13px; white-space: pre; }
td.n { text-align: right; padding-right: 2px; }
.tall td { height: 50px; }
.taller td { height: 57px; }
td.wrap { line-height: 18px; }
td.mark { background: #ff0; }
.scroll { width: 16px; flex: none; display: flex; flex-direction: column; align-items: center; background: #d8dce2; border-left: 1px solid #b4bac2; }
.split { width: 15px; height: 6px; border: 1px solid #7f858d; background: #fff; }
.up { margin-top: 6px; border: 5px solid transparent; border-top: 0; border-bottom-color: #444; }
.thumb { margin-top: 71px; width: 14px; height: 17px; border: 1px solid #8f959c; background: repeating-linear-gradient(#fff 0 2px, #9aa1a9 2px 3px); }

/* browser window */
.browser { flex: 1; min-width: 0; overflow: hidden; display: flex; flex-direction: column; background: #fff; white-space: nowrap; font-family: "Liberation Sans", "Noto Sans CJK SC", sans-serif; }
.wallpaper { height: 4px; flex: none; background: linear-gradient(90deg, #3b82d8 0 70px, #123a6e 120px, #1f5c3a 240px, #0d2c4c 320px, #34703c); }
.menubar { height: 30px; flex: none; display: flex; align-items: center; gap: 18px; background: #f1f1f1; color: #555; padding-bottom: 4px; }
.menubar .name { width: 268px; }
.menubar svg + button { margin-left: -9px; }
.address { height: 26px; flex: none; display: flex; background: #f1f1f1; border-top: 1px solid #bbb; border-bottom: 1px solid #bbb; }
.reload { width: 19px; border-right: 1px solid #ccc; }
.home { width: 32px; }
.address button { display: flex; align-items: center; justify-content: center; }
.url { flex: 1; display: flex; align-items: center; gap: 2px; padding-left: 3px; border-left: 1px solid #ccc; background: #fff; color: #999; font: 14px "Noto Sans", sans-serif; }
.url b { font-weight: 400; color: #111; }
.speed { margin-left: auto; margin-right: 2px; }
.bookmarks { height: 38px; flex: none; display: flex; align-items: center; gap: 12px; background: #f1f1f1; color: #222; }
.bookmarks a, .bookmarks button { display: flex; align-items: center; gap: 3px; }
.bookmarks .dots { margin-left: 24px; }
.ext .caret { margin-left: 10px; }
.ext + .aa { margin-left: -2px; }
.aa { border: 1px solid #e58a8a; background: #fbe0e0; color: #d44; padding: 1px 2px; }
.pagetabs { height: 28px; flex: none; display: flex; background: #e4e4e4; border-bottom: 1px solid #bbb; }
.pagetabs button { display: flex; align-items: center; gap: 4px; border: 1px solid #b5b5b5; border-bottom: 0; border-radius: 4px 4px 0 0; color: #444; }
.pagetabs .first { width: 19px; color: #3a9a4b; border-left: 0; }
.pagetabs .second { width: 223px; padding: 0 11px; margin: 0 1px; }
.second svg:last-child { margin-left: auto; }
.pagetabs .third { flex: 1; min-width: 0; background: #fff; padding-left: 10px; color: #111; overflow: hidden; }
.sitenav { height: 40px; flex: none; display: flex; align-items: center; gap: 22px; margin-top: 1px; border-top: 5px solid #4480cf; border-bottom: 3px solid #a3bdd9; background: linear-gradient(#eee, #fff 60%); color: #b5320c; }
.search { display: flex; flex: none; height: 69px; padding: 23px 0 12px; border-bottom: 1px solid #777; }
.search input { width: 239px; height: 34px; flex: none; border: 1px solid #175796; border-left: 0; }
.go { width: 104px; height: 34px; flex: none; display: flex; align-items: center; justify-content: center; gap: 12px; background: #3d87d8; border: 1px solid #175796; color: #fff; }
.ask { width: 100px; height: 32px; flex: none; display: flex; align-items: center; gap: 13px; margin-left: 20px; padding-left: 9px; border: 1px solid #888; border-radius: 3px; background: linear-gradient(#fff, #e4e4e4); color: #111; }
.ask b { font: 400 18px "Liberation Sans", sans-serif; color: #2a5aa5; }
.search button { font-size: 14px; }
.page { flex: 1; min-height: 0; display: flex; }
.side { width: 4px; flex: none; display: flex; flex-direction: column; gap: 10px; padding-top: 12px; }
.side i { height: 30px; flex: none; background: #c5d9fa; }
.side .grey { height: 50px; background: #e5e5e5; }
main { flex: 1; min-width: 0; margin: 11px 0 0 10px; display: flex; flex-direction: column; }
.qtabs { display: flex; flex: none; align-items: flex-end; gap: 16px; height: 30px; padding-left: 8px; background: #dcedfd; border-bottom: 1px solid #a3bedd; font-size: 14px; color: #112; line-height: 20px; }
.qtabs a { text-decoration: underline; margin-bottom: 4px; }
.qtabs .cur { height: 25px; padding: 0 9px; margin-bottom: -1px; border: 1px solid #a3bedd; border-bottom: 0; background: #fff; font-size: 15px; font-weight: 700; text-decoration: none; color: #000; line-height: 22px; }
.questions { flex: 1; display: flex; flex-direction: column; padding-left: 19px; color: #111; }
.head { height: 47px; padding: 19px 0 0 4px; line-height: 18px; }
.q { height: 34px; display: flex; align-items: center; gap: 8px; padding: 0 0 2px 7px; border-top: 1px dotted #aaa; line-height: 18px; }
.q a { font-size: 14px; color: #1010c8; }
.q .pts { color: #c4564b; margin-left: -2px; }
.q svg:first-child { margin-bottom: 4px; }
.detail { flex: 1; padding: 8px 0 0 20px; border: 1px solid #c0c0c0; border-right: 0; border-bottom: 0; color: #999; }
.detail p { display: flex; gap: 14px; margin: 0; line-height: 18px; }
.detail p i { font-style: normal; }
.detail p b { font-weight: 400; color: #2b3d78; }
.answer { height: 287px; display: flex; flex-direction: column; align-items: flex-start; margin-top: 71px; padding: 7px 0 13px 8px; border: 1px solid #a9c0e0; border-right: 0; background: #e3f0fe; }
.answer button { display: flex; align-items: center; gap: 5px; height: 19px; line-height: 18px; color: #33475f; }
.answer textarea { align-self: stretch; flex: 1; resize: none; padding: 5px; border: 1px solid #a9c0e0; border-right: 0; background: #fff; overflow: hidden; white-space: pre; line-height: 18px; }
.answer textarea::placeholder { color: #bbb; opacity: 1; }

/* red annotations drawn over both windows */
.marks { position: absolute; top: 0; left: 0; pointer-events: none; }
```
